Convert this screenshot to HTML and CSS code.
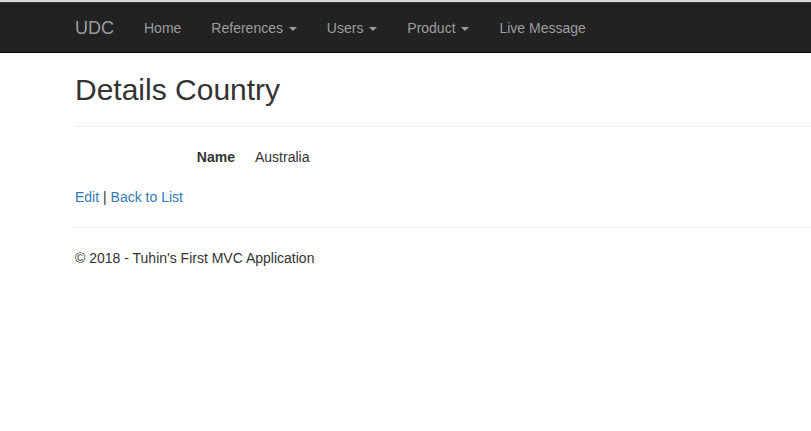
FILE: index.html
```html
<!DOCTYPE html>
<html lang="en">
<head>
<meta charset="utf-8">
<title>Details - UDC</title>
<link rel="stylesheet" href="styles.css">
</head>
<body>
<div class="topstrip"></div>
<nav class="navbar">
  <div class="container nav-inner">
    <a class="brand" href="#">UDC</a>
    <ul class="nav">
      <li><a href="#">Home</a></li>
      <li><a href="#">References <span class="caret"></span></a></li>
      <li><a href="#">Users <span class="caret"></span></a></li>
      <li><a href="#">Product <span class="caret"></span></a></li>
      <li><a href="#">Live Message</a></li>
    </ul>
  </div>
</nav>
<main class="container body-content">
  <h2 class="title">Details Country</h2>
  <hr class="rule">
  <dl class="dl-horizontal">
    <dt>Name</dt>
    <dd>Australia</dd>
  </dl>
  <p class="actions"><a href="#">Edit</a> | <a href="#">Back to List</a></p>
  <hr class="rule">
  <footer class="footer">
    <p>&copy; 2018 - Tuhin's First MVC Application</p>
  </footer>
</main>
</body>
</html>
```
FILE: styles.css
```css
html, body {
  margin: 0;
  padding: 0;
}
body {
  font-family: "Liberation Sans", Arial, Helvetica, sans-serif;
  font-size: 14px;
  line-height: 20px;
  color: #333;
  background: #fff;
  overflow: hidden;
}
a {
  color: #337ab7;
  text-decoration: none;
}
.topstrip {
  height: 2px;
  background: #d9d9d9;
}
.container {
  margin-left: 60px;
  padding: 0 0 0 15px;
}
.navbar {
  height: 51px;
  box-sizing: border-box;
  background: #222;
  border-bottom: 1px solid #080808;
  box-shadow: inset 0 1px 0 #333;
}
.nav-inner {
  display: flex;
  align-items: center;
  height: 50px;
}
.brand {
  display: block;
  margin-left: -15px;
  padding: 16px 15px 14px;
  font-size: 18px;
  line-height: 20px;
  color: #9d9d9d;
}
.nav {
  display: flex;
  margin: 0;
  padding: 0;
  list-style: none;
}
.nav a {
  display: block;
  padding: 16px 15px 14px;
  line-height: 20px;
  color: #9d9d9d;
}
.caret {
  display: inline-block;
  width: 0;
  height: 0;
  margin-left: 2px;
  vertical-align: middle;
  border-top: 4px solid #9d9d9d;
  border-left: 4px solid transparent;
  border-right: 4px solid transparent;
}
.body-content::before {
  content: "";
  display: table;
}
.title {
  margin: 20px 0 10px;
  font-size: 30px;
  font-weight: 500;
  line-height: 33px;
}
.rule {
  margin: 20px 0;
  border: 0;
  border-top: 1px solid #eee;
}
.dl-horizontal {
  display: flex;
  margin: 0 0 20px;
}
.dl-horizontal dt {
  width: 160px;
  text-align: right;
  font-weight: 700;
}
.dl-horizontal dd {
  margin-left: 20px;
}
.actions {
  margin: 0 0 10px;
}
.footer p {
  margin: 0 0 10px;
}
```
